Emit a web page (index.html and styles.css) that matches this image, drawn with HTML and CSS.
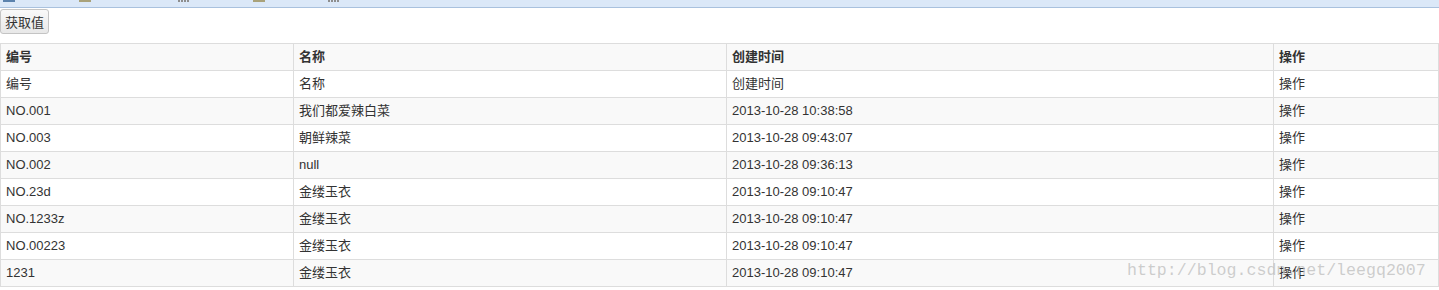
FILE: index.html
```html
<!DOCTYPE html>
<html>
<head>
<meta charset="utf-8">
<link rel="stylesheet" href="styles.css">
</head>
<body>
<div class="topbar">
  <span class="ico ico-blue"></span>
  <span class="ico ico-olive i2"></span>
  <span class="ico ico-dots i3"></span>
  <span class="ico ico-olive i4"></span>
  <span class="ico ico-dots i5"></span>
</div>
<div class="toolbar"><button class="btn">获取值</button></div>
<table class="grid">
  <thead>
    <tr><th class="c1">编号</th><th class="c2">名称</th><th class="c3">创建时间</th><th class="c4">操作</th></tr>
  </thead>
  <tbody>
    <tr><td>编号</td><td>名称</td><td>创建时间</td><td>操作</td></tr>
    <tr class="alt"><td>NO.001</td><td>我们都爱辣白菜</td><td>2013-10-28 10:38:58</td><td>操作</td></tr>
    <tr><td>NO.003</td><td>朝鲜辣菜</td><td>2013-10-28 09:43:07</td><td>操作</td></tr>
    <tr class="alt"><td>NO.002</td><td>null</td><td>2013-10-28 09:36:13</td><td>操作</td></tr>
    <tr><td>NO.23d</td><td>金缕玉衣</td><td>2013-10-28 09:10:47</td><td>操作</td></tr>
    <tr class="alt"><td>NO.1233z</td><td>金缕玉衣</td><td>2013-10-28 09:10:47</td><td>操作</td></tr>
    <tr><td>NO.00223</td><td>金缕玉衣</td><td>2013-10-28 09:10:47</td><td>操作</td></tr>
    <tr class="alt"><td>1231</td><td>金缕玉衣</td><td>2013-10-28 09:10:47</td><td>操作</td></tr>
  </tbody>
</table>
<div class="watermark">http://blog.csdn.net/leegq2007</div>
</body>
</html>
```

FILE: styles.css
```css
html, body {
  margin: 0;
  padding: 0;
  background: #fff;
}
body {
  position: relative;
  width: 1439px;
  height: 290px;
  overflow: hidden;
  font-family: "Liberation Sans", Arial, "Noto Sans CJK SC", sans-serif;
  font-size: 12px;
  color: #333;
}
.topbar {
  height: 7px;
  background: #dbe8f8;
  border-bottom: 1px solid #a9c1de;
  display: flex;
  align-items: flex-start;
}
.ico {
  display: block;
  height: 2px;
  width: 12px;
}
.ico-blue { background: #5b82ad; margin-left: 3px; }
.ico-olive { background: #a9a27a; }
.ico-dots {
  width: 12px;
  height: 2px;
  background: repeating-linear-gradient(90deg, #8e8e8e 0 2px, transparent 2px 3px);
}
.i2 { margin-left: 64px; }
.i3 { margin-left: 87px; }
.i4 { margin-left: 63px; }
.i5 { margin-left: 63px; }
.toolbar {
  padding-top: 1px;
  height: 34px;
}
.btn {
  display: block;
  margin: 0;
  height: 25px;
  width: 49px;
  padding: 0 3px;
  font-family: "Noto Sans CJK SC", sans-serif;
  font-size: 13px;
  line-height: 23px;
  color: #333;
  background: linear-gradient(#f9f9f9, #e8e8e8);
  border: 1px solid #c4c4c4;
  border-radius: 3px;
}
.grid {
  border-collapse: collapse;
  width: 1439px;
  table-layout: fixed;
}
.grid th, .grid td {
  border: 1px solid #dddddd;
  padding: 4px 5px;
  line-height: 18px;
  height: 18px;
  text-align: left;
  white-space: nowrap;
  overflow: hidden;
  font-family: "Liberation Sans", Arial, "Noto Sans CJK SC", sans-serif;
  font-size: 13px;
}
.grid th {
  font-weight: bold;
  background: #f9f9f9;
  color: #333;
}
.grid .c1 { width: 282px; }
.grid .c2 { width: 422px; }
.grid .c3 { width: 536px; }
.grid .c4 { width: auto; }
.grid tr.alt td { background: #f9f9f9; }
.watermark {
  position: absolute;
  left: 1127px;
  top: 260px;
  font-family: "Liberation Mono", "DejaVu Sans Mono", monospace;
  font-size: 16.6px;
  line-height: 22px;
  color: rgba(190, 190, 190, 0.75);
  pointer-events: none;
}
```
